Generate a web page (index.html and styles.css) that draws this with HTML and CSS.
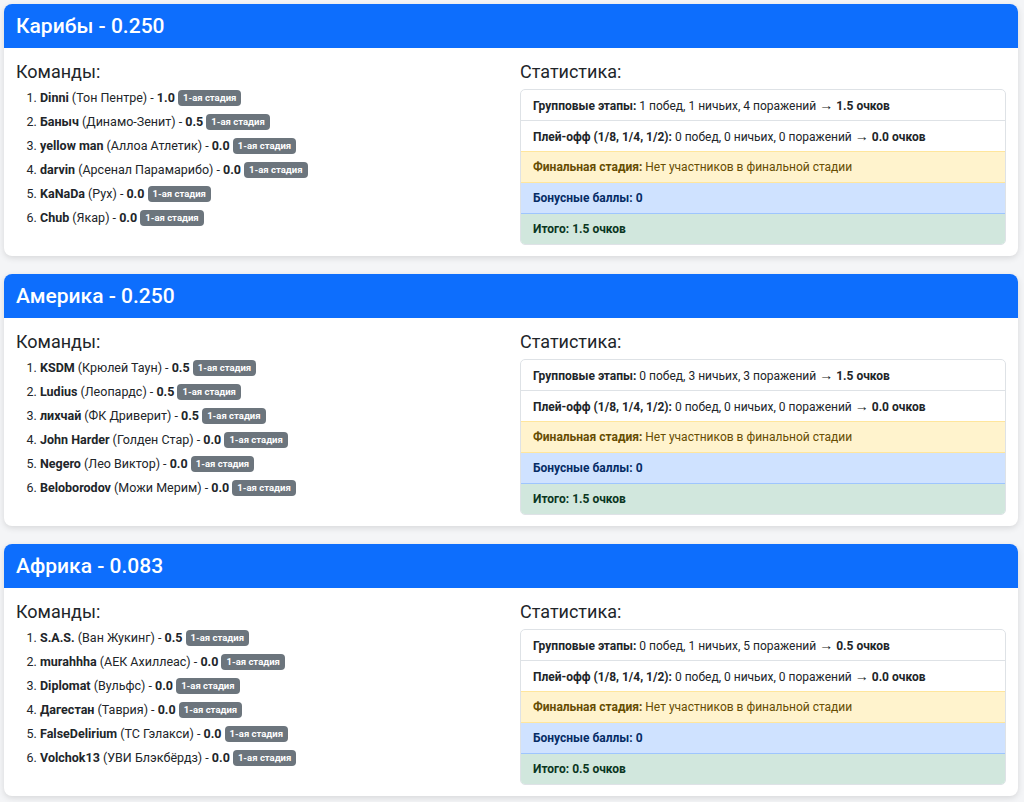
FILE: index.html
```html
<!DOCTYPE html>
<html lang="ru">
<head>
    <meta charset="UTF-8">
    <meta name="viewport" content="width=device-width, initial-scale=1.0">
    <title>Регионы</title>
    <link rel="stylesheet" href="styles.css">
</head>
<body>
    <div class="region-card">
        <div class="region-header">Карибы - 0.250</div>
        <div class="region-body">
            <div>
                <h5 class="section-title">Команды:</h5>
                <ol class="team-list">
                    <li><strong>Dinni</strong> (Тон Пентре) - <strong>1.0</strong> <span class="badge">1-ая стадия</span></li>
                    <li><strong>Баныч</strong> (Динамо-Зенит) - <strong>0.5</strong> <span class="badge">1-ая стадия</span></li>
                    <li><strong>yellow man</strong> (Аллоа Атлетик) - <strong>0.0</strong> <span class="badge">1-ая стадия</span></li>
                    <li><strong>darvin</strong> (Арсенал Парамарибо) - <strong>0.0</strong> <span class="badge">1-ая стадия</span></li>
                    <li><strong>KaNaDa</strong> (Рух) - <strong>0.0</strong> <span class="badge">1-ая стадия</span></li>
                    <li><strong>Chub</strong> (Якар) - <strong>0.0</strong> <span class="badge">1-ая стадия</span></li>
                </ol>
            </div>
            <div>
                <h5 class="section-title">Статистика:</h5>
                <ul class="stats">
                    <li><strong>Групповые этапы:</strong> 1 побед, 1 ничьих, 4 поражений <b class="arrow">→</b> <strong>1.5 очков</strong></li>
                    <li><strong>Плей-офф (1/8, 1/4, 1/2):</strong> 0 побед, 0 ничьих, 0 поражений <b class="arrow">→</b> <strong>0.0 очков</strong></li>
                    <li class="warning"><strong>Финальная стадия:</strong> Нет участников в финальной стадии</li>
                    <li class="primary"><strong>Бонусные баллы: 0</strong></li>
                    <li class="success"><strong>Итого: 1.5 очков</strong></li>
                </ul>
            </div>
        </div>
    </div>

    <div class="region-card">
        <div class="region-header">Америка - 0.250</div>
        <div class="region-body">
            <div>
                <h5 class="section-title">Команды:</h5>
                <ol class="team-list">
                    <li><strong>KSDM</strong> (Крюлей Таун) - <strong>0.5</strong> <span class="badge">1-ая стадия</span></li>
                    <li><strong>Ludius</strong> (Леопардс) - <strong>0.5</strong> <span class="badge">1-ая стадия</span></li>
                    <li><strong>лихчай</strong> (ФК Дриверит) - <strong>0.5</strong> <span class="badge">1-ая стадия</span></li>
                    <li><strong>John Harder</strong> (Голден Стар) - <strong>0.0</strong> <span class="badge">1-ая стадия</span></li>
                    <li><strong>Negero</strong> (Лео Виктор) - <strong>0.0</strong> <span class="badge">1-ая стадия</span></li>
                    <li><strong>Beloborodov</strong> (Можи Мерим) - <strong>0.0</strong> <span class="badge">1-ая стадия</span></li>
                </ol>
            </div>
            <div>
                <h5 class="section-title">Статистика:</h5>
                <ul class="stats">
                    <li><strong>Групповые этапы:</strong> 0 побед, 3 ничьих, 3 поражений <b class="arrow">→</b> <strong>1.5 очков</strong></li>
                    <li><strong>Плей-офф (1/8, 1/4, 1/2):</strong> 0 побед, 0 ничьих, 0 поражений <b class="arrow">→</b> <strong>0.0 очков</strong></li>
                    <li class="warning"><strong>Финальная стадия:</strong> Нет участников в финальной стадии</li>
                    <li class="primary"><strong>Бонусные баллы: 0</strong></li>
                    <li class="success"><strong>Итого: 1.5 очков</strong></li>
                </ul>
            </div>
        </div>
    </div>

    <div class="region-card">
        <div class="region-header">Африка - 0.083</div>
        <div class="region-body">
            <div>
                <h5 class="section-title">Команды:</h5>
                <ol class="team-list">
                    <li><strong>S.A.S.</strong> (Ван Жукинг) - <strong>0.5</strong> <span class="badge">1-ая стадия</span></li>
                    <li><strong>murahhha</strong> (АЕК Ахиллеас) - <strong>0.0</strong> <span class="badge">1-ая стадия</span></li>
                    <li><strong>Diplomat</strong> (Вульфс) - <strong>0.0</strong> <span class="badge">1-ая стадия</span></li>
                    <li><strong>Дагестан</strong> (Таврия) - <strong>0.0</strong> <span class="badge">1-ая стадия</span></li>
                    <li><strong>FalseDelirium</strong> (ТС Гэлакси) - <strong>0.0</strong> <span class="badge">1-ая стадия</span></li>
                    <li><strong>Volchok13</strong> (УВИ Блэкбёрдз) - <strong>0.0</strong> <span class="badge">1-ая стадия</span></li>
                </ol>
            </div>
            <div>
                <h5 class="section-title">Статистика:</h5>
                <ul class="stats">
                    <li><strong>Групповые этапы:</strong> 0 побед, 1 ничьих, 5 поражений <b class="arrow">→</b> <strong>0.5 очков</strong></li>
                    <li><strong>Плей-офф (1/8, 1/4, 1/2):</strong> 0 побед, 0 ничьих, 0 поражений <b class="arrow">→</b> <strong>0.0 очков</strong></li>
                    <li class="warning"><strong>Финальная стадия:</strong> Нет участников в финальной стадии</li>
                    <li class="primary"><strong>Бонусные баллы: 0</strong></li>
                    <li class="success"><strong>Итого: 0.5 очков</strong></li>
                </ul>
            </div>
        </div>
    </div>
</body>
</html>
```

FILE: styles.css
```css
body {
    margin: 0;
    padding: 4px 6px 4px 4px;
    background-color: #f4f5f7;
    font-family: Roboto, "Noto Sans", sans-serif;
    color: #212529;
}
.region-card {
    background-color: #fff;
    border-radius: 8px;
    box-shadow: 0 2px 6px rgba(0, 0, 0, 0.12);
    margin-bottom: 18px;
    overflow: hidden;
}
.region-header {
    background-color: #0d6efd;
    color: #fff;
    height: 44px;
    line-height: 44px;
    padding: 0 12px;
    font-size: 21px;
    font-weight: 500;
}
.region-body {
    display: grid;
    grid-template-columns: 1fr 1fr;
    column-gap: 18px;
    padding: 12px 12px 11px;
}
.section-title {
    margin: 0 0 5px;
    font-size: 18px;
    font-weight: 400;
    line-height: 24px;
}
.team-list {
    margin: -3px 0 0;
    padding-left: 24px;
    font-size: 12.5px;
}
.team-list li {
    line-height: 24px;
}
.badge {
    display: inline-block;
    background-color: #6c757d;
    color: #fff;
    font-size: 9.5px;
    font-weight: 700;
    line-height: 1;
    padding: 3px 5px;
    border-radius: 4px;
    vertical-align: 1px;
}
.stats {
    list-style: none;
    margin: 0;
    padding: 0;
    border: 1px solid #dee2e6;
    border-radius: 5px;
    overflow: hidden;
    font-size: 12px;
}
.stats li {
    height: 30px;
    line-height: 30px;
    padding: 0 12px;
    border-top: 1px solid #dee2e6;
}
.stats li:first-child {
    border-top: none;
}
.arrow {
    font-size: 14px;
}
.stats .warning {
    background-color: #fff3cd;
    color: #664d03;
    border-top-color: #ffe69c;
}
.stats .primary {
    background-color: #cfe2ff;
    color: #052c65;
    border-top-color: #ffe69c;
}
.stats .success {
    background-color: #d1e7dd;
    color: #0a3622;
    border-top-color: #9ec5fe;
}
```
